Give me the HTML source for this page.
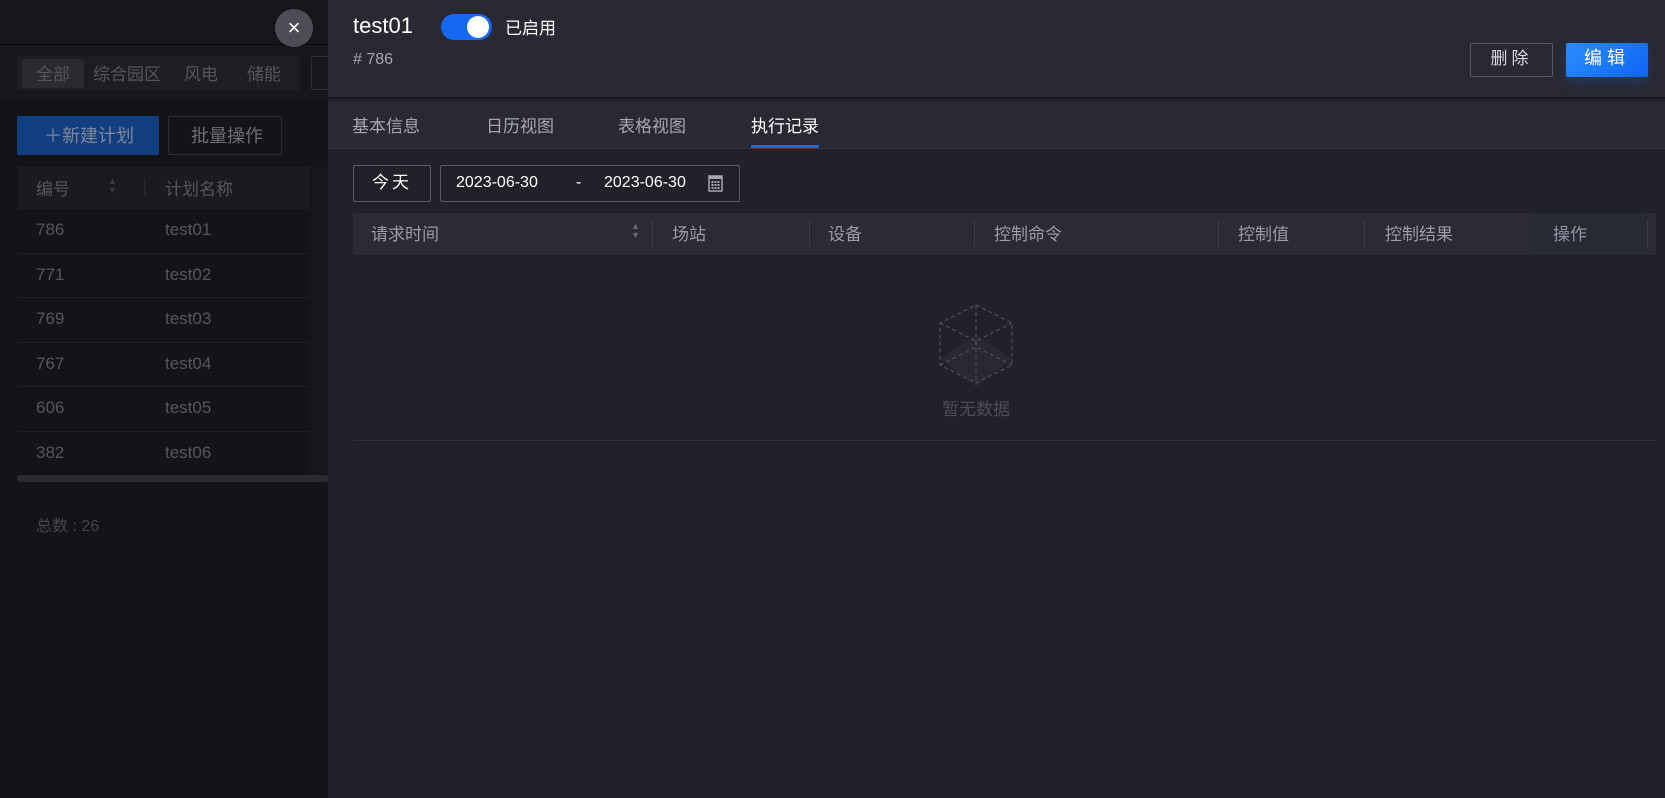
<!DOCTYPE html>
<html><head><meta charset="utf-8"><style>
*{margin:0;padding:0;box-sizing:border-box}
body{width:1665px;height:798px;overflow:hidden;background:#141418;font-family:"Liberation Sans","Noto Sans CJK SC",sans-serif;position:relative}
.a{position:absolute;white-space:nowrap}
.l{color:#55565e;font-size:17px}
.d{color:#a4a6b0;font-size:17px}
</style></head><body>
<div class="a" style="left:0;top:0;width:328px;height:45px;background:#17171b;border-bottom:1px solid #0c0c0e"></div>
<div class="a" style="left:0;top:45px;width:328px;height:57px;background:#17171b"></div>
<div class="a" style="left:17px;top:56px;width:283px;height:34px;background:#1d1d22;border-radius:2px"></div>
<div class="a" style="left:22px;top:59px;width:62px;height:29px;background:#2a2a30;border-radius:2px"></div>
<div class="a l" style="left:36px;top:60px">全部</div>
<div class="a l" style="left:93px;top:60px">综合园区</div>
<div class="a l" style="left:184px;top:60px">风电</div>
<div class="a l" style="left:247px;top:60px">储能</div>
<div class="a" style="left:311px;top:56px;width:30px;height:34px;border:1px solid #2e2e34;border-radius:2px"></div>
<div class="a" style="left:17px;top:116px;width:142px;height:39px;background:#123f80;border-radius:2px"></div>
<div class="a" style="left:44px;top:122px;color:#7f8698;font-size:18px">＋新建计划</div>
<div class="a" style="left:168px;top:116px;width:114px;height:39px;border:1px solid #2c2c32;border-radius:2px"></div>
<div class="a" style="left:191px;top:122px;color:#6c6e76;font-size:18px">批量操作</div>
<div class="a" style="left:17px;top:167px;width:311px;height:42px;background:#1a1a1f"></div>
<div class="a l" style="left:36px;top:175px">编号</div>
<div class="a" style="left:108px;top:177px;color:#3c3c44;font-size:9px;line-height:9px">▲<br>▼</div>
<div class="a" style="left:144px;top:178px;width:1px;height:18px;background:#2a2a30"></div>
<div class="a l" style="left:165px;top:175px">计划名称</div>
<div class="a" style="left:310px;top:167px;width:18px;height:311px;background:#17171b"></div>
<div style="position:absolute;left:17px;top:209px;width:293px">
<div style="height:44.6px;border-bottom:1px solid #1e1e23;position:relative"><span class="a l" style="left:19px;top:11px">786</span><span class="a l" style="left:148px;top:11px">test01</span></div>
<div style="height:44.6px;border-bottom:1px solid #1e1e23;position:relative"><span class="a l" style="left:19px;top:11px">771</span><span class="a l" style="left:148px;top:11px">test02</span></div>
<div style="height:44.6px;border-bottom:1px solid #1e1e23;position:relative"><span class="a l" style="left:19px;top:11px">769</span><span class="a l" style="left:148px;top:11px">test03</span></div>
<div style="height:44.6px;border-bottom:1px solid #1e1e23;position:relative"><span class="a l" style="left:19px;top:11px">767</span><span class="a l" style="left:148px;top:11px">test04</span></div>
<div style="height:44.6px;border-bottom:1px solid #1e1e23;position:relative"><span class="a l" style="left:19px;top:11px">606</span><span class="a l" style="left:148px;top:11px">test05</span></div>
<div style="height:44.6px;position:relative"><span class="a l" style="left:19px;top:11px">382</span><span class="a l" style="left:148px;top:11px">test06</span></div>
</div>
<div class="a" style="left:17px;top:475px;width:311px;height:7px;background:#2a2a30;border-radius:2px"></div>
<div class="a" style="left:36px;top:512px;color:#44454c;font-size:16px">总数 : 26</div>
<div class="a" style="left:275px;top:9px;width:38px;height:38px;border-radius:50%;background:#4d4e55;color:#fff;font-size:22px;text-align:center;line-height:37px">×</div>

<div class="a" style="left:328px;top:0;width:1337px;height:798px;background:#212129"></div>
<div class="a" style="left:328px;top:0;width:1337px;height:99px;background:#282933;border-bottom:2px solid #1a1a20"></div>
<div class="a" style="left:353px;top:13px;color:#fff;font-size:22px">test01</div>
<div class="a" style="left:441px;top:14px;width:51px;height:26px;border-radius:13px;background:#1668f0"></div>
<div class="a" style="left:467px;top:16px;width:22px;height:22px;border-radius:50%;background:#fff"></div>
<div class="a" style="left:505px;top:14px;color:#fff;font-size:17px">已启用</div>
<div class="a" style="left:353px;top:51px;color:#a4a6b0;font-size:16px"># 786</div>
<div class="a" style="left:1470px;top:43px;width:83px;height:34px;border:1px solid #56575f;border-radius:2px;color:#d8d9de;font-size:17px;text-align:center;line-height:30px;letter-spacing:4px">删除</div>
<div class="a" style="left:1566px;top:43px;width:82px;height:34px;border-radius:2px;background:linear-gradient(135deg,#2a8cff,#0f66f2);color:#fff;font-size:18px;text-align:center;line-height:31px;letter-spacing:5px;box-shadow:0 6px 10px rgba(40,80,160,.35)">编辑</div>
<div class="a" style="left:328px;top:101px;width:1337px;height:48px;background:#282933;border-bottom:1px solid #34353f"></div>
<div class="a d" style="left:352px;top:112px">基本信息</div>
<div class="a d" style="left:486px;top:112px">日历视图</div>
<div class="a d" style="left:618px;top:112px">表格视图</div>
<div class="a" style="left:751px;top:112px;color:#fff;font-size:17px">执行记录</div>
<div class="a" style="left:751px;top:145px;width:68px;height:3px;background:#1668f0"></div>
<div class="a" style="left:353px;top:165px;width:78px;height:37px;border:1px solid #5a5b63;border-radius:2px;color:#fff;font-size:17px;text-align:center;line-height:33px;letter-spacing:3px">今天</div>
<div class="a" style="left:440px;top:165px;width:300px;height:37px;border:1px solid #5a5b63;border-radius:2px"></div>
<div class="a" style="left:456px;top:174px;color:#fff;font-size:16px">2023-06-30</div>
<div class="a" style="left:576px;top:174px;color:#fff;font-size:16px">-</div>
<div class="a" style="left:604px;top:174px;color:#fff;font-size:16px">2023-06-30</div>
<svg class="a" style="left:708px;top:174px" width="15" height="18" viewBox="0 0 15 18"><rect x="1" y="2" width="13" height="15" fill="none" stroke="#a4a6b0" stroke-width="1.5"/><rect x="1" y="2" width="13" height="3" fill="#a4a6b0"/><g fill="#a4a6b0"><rect x="3.5" y="7" width="2" height="2"/><rect x="6.5" y="7" width="2" height="2"/><rect x="9.5" y="7" width="2" height="2"/><rect x="3.5" y="10" width="2" height="2"/><rect x="6.5" y="10" width="2" height="2"/><rect x="9.5" y="10" width="2" height="2"/><rect x="3.5" y="13" width="2" height="2"/><rect x="6.5" y="13" width="2" height="2"/><rect x="9.5" y="13" width="2" height="2"/></g></svg>
<div class="a" style="left:353px;top:213px;width:1303px;height:42px;background:#2a2b34"></div>
<div class="a d" style="left:371px;top:220px;color:#9a9ca6">请求时间</div>
<div class="a" style="left:631px;top:222px;color:#6a6b74;font-size:9px;line-height:9px">▲<br>▼</div>
<div class="a" style="left:652px;top:220px;width:1px;height:27px;background:#3a3b45"></div>
<div class="a d" style="left:672px;top:220px;color:#9a9ca6">场站</div>
<div class="a" style="left:809px;top:220px;width:1px;height:27px;background:#3a3b45"></div>
<div class="a d" style="left:828px;top:220px;color:#9a9ca6">设备</div>
<div class="a" style="left:974px;top:220px;width:1px;height:27px;background:#3a3b45"></div>
<div class="a d" style="left:994px;top:220px;color:#9a9ca6">控制命令</div>
<div class="a" style="left:1218px;top:220px;width:1px;height:27px;background:#3a3b45"></div>
<div class="a d" style="left:1238px;top:220px;color:#9a9ca6">控制值</div>
<div class="a" style="left:1364px;top:220px;width:1px;height:27px;background:#3a3b45"></div>
<div class="a d" style="left:1385px;top:220px;color:#9a9ca6">控制结果</div>
<div class="a" style="left:1533px;top:213px;width:114px;height:42px;background:#282a33"></div>
<div class="a d" style="left:1553px;top:220px;color:#8e94a4">操作</div>
<div class="a" style="left:1647px;top:220px;width:1px;height:27px;background:#3a3b45"></div>
<svg class="a" style="left:935px;top:303px" width="82" height="86" viewBox="0 0 82 86"><polygon points="41,32 77,56 41,84 6,56" fill="#292a31"/><g fill="none" stroke="#4b4c55" stroke-width="1.3" stroke-dasharray="4 3"><polygon points="41,2 77,20 77,62 41,80 5,62 5,20"/><polyline points="5,20 41,38 77,20"/><line x1="41" y1="38" x2="41" y2="80"/><line x1="41" y1="2" x2="41" y2="44"/><polyline points="5,62 41,44 77,62"/></g></svg>
<div class="a" style="left:942px;top:395px;color:#4c4d56;font-size:17px">暂无数据</div>
<div class="a" style="left:353px;top:440px;width:1303px;height:1px;background:#30313a"></div>
</body></html>
